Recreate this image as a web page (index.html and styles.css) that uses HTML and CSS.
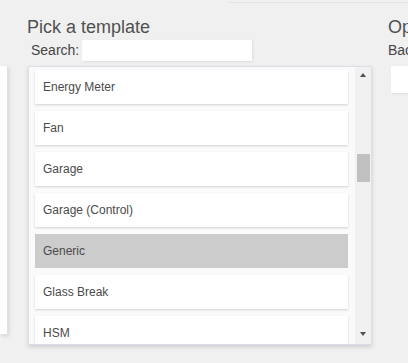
FILE: index.html
```html
<!DOCTYPE html>
<html>
<head>
<meta charset="utf-8">
<link rel="stylesheet" href="styles.css">
</head>
<body>
<div class="topbar"></div>
<div class="row">
  <div class="leftpanel"></div>
  <div class="center">
    <h2 class="title">Pick a template</h2>
    <div class="search">
      <label class="label">Search:</label>
      <input class="input" type="text">
    </div>
    <div class="box">
      <div class="list">
        <div class="item">Energy Meter</div>
        <div class="item">Fan</div>
        <div class="item">Garage</div>
        <div class="item">Garage (Control)</div>
        <div class="item selected">Generic</div>
        <div class="item">Glass Break</div>
        <div class="item">HSM</div>
      </div>
      <div class="scrollbar">
        <div class="sbtn"><span class="arrow-up"></span></div>
        <div class="track"><div class="thumb"></div></div>
        <div class="sbtn"><span class="arrow-down"></span></div>
      </div>
    </div>
  </div>
  <div class="right">
    <h2 class="title">Options</h2>
    <div class="rlabel">Background</div>
    <div class="rinput"></div>
  </div>
</div>
</body>
</html>
```
FILE: styles.css
```css
html, body {
  margin: 0;
  padding: 0;
  background: #f0f0f0;
  font-family: "Liberation Sans", Arial, sans-serif;
  overflow: hidden;
  width: 408px;
  height: 363px;
}
.topbar {
  height: 2px;
  margin-left: 228px;
  border-bottom: 1px solid #e2e4e9;
}
.row {
  display: flex;
  align-items: flex-start;
  width: 600px;
}
.leftpanel {
  flex: none;
  width: 7px;
  height: 268px;
  margin-top: 63px;
  background: #fff;
  border-right: 1px solid #dcdfe4;
  box-shadow: 1px 2px 4px rgba(0,0,0,0.12);
}
.center {
  flex: none;
  margin-left: 19px;
  width: 345px;
}
.title {
  margin: 13px 0 0 0;
  font-size: 18px;
  line-height: 22px;
  font-weight: normal;
  color: #505050;
  white-space: nowrap;
}
.search {
  display: flex;
  align-items: flex-start;
  margin-top: 2px;
  padding-left: 4px;
  height: 21px;
}
.label {
  font-size: 14px;
  line-height: 21px;
  color: #454545;
  width: 51px;
  white-space: nowrap;
}
.input {
  box-sizing: border-box;
  width: 170px;
  height: 21px;
  margin: 0;
  border: none;
  background: #fff;
  box-shadow: 1px 1px 2px rgba(0,0,0,0.08);
  outline: none;
}
.box {
  display: flex;
  margin-top: 5px;
  margin-left: 1px;
  width: 342px;
  height: 277px;
  border: 1px solid #d9dee7;
  background: #f1f1f1;
  box-shadow: 0 2px 4px rgba(0,0,0,0.14);
}
.list {
  flex: none;
  width: 326px;
  height: 277px;
  overflow: hidden;
  padding: 3px 0 0 6px;
  box-sizing: border-box;
  background: #fafafa;
}
.item {
  width: 305px;
  height: 34px;
  margin-bottom: 7px;
  padding-left: 8px;
  background: #fff;
  font-size: 12px;
  line-height: 34px;
  color: #4a4a4a;
  box-shadow: 0 1px 2px rgba(0,0,0,0.16);
}
.item.selected {
  background: #cccccc;
  box-shadow: none;
}
.scrollbar {
  flex: none;
  width: 16px;
  height: 277px;
  display: flex;
  flex-direction: column;
  background: #f1f1f1;
}
.sbtn {
  height: 17px;
  position: relative;
}
.arrow-up, .arrow-down {
  position: absolute;
  left: 5px;
  width: 0;
  height: 0;
  border-left: 3.5px solid transparent;
  border-right: 3.5px solid transparent;
}
.arrow-up {
  top: 6px;
  border-bottom: 4px solid #505050;
}
.arrow-down {
  top: 5px;
  border-top: 4px solid #505050;
}
.track {
  flex: 1;
  padding-top: 70px;
}
.thumb {
  margin-left: 2px;
  width: 13px;
  height: 28px;
  background: #c1c1c1;
}
.right {
  flex: none;
  margin-left: 16px;
  width: 200px;
}
.rlabel {
  margin-top: 2px;
  font-size: 14px;
  line-height: 21px;
  color: #454545;
  white-space: nowrap;
}
.rinput {
  margin-top: 5px;
  margin-left: 3px;
  width: 170px;
  height: 27px;
  background: #fff;
  box-shadow: 1px 1px 2px rgba(0,0,0,0.08);
}
```
